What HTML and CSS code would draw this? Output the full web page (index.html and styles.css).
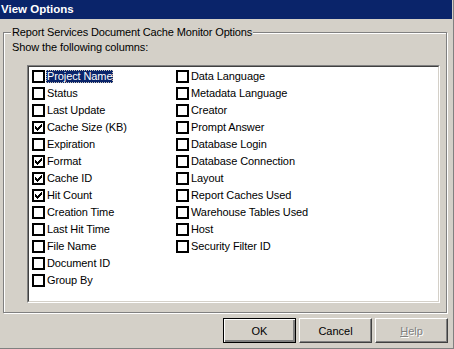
FILE: index.html
```html
<!DOCTYPE html>
<html>
<head>
<meta charset="utf-8">
<link rel="stylesheet" href="styles.css">
</head>
<body>
<div class="window">
  <div class="titlebar">View Options</div>
  <fieldset class="group">
    <legend class="group-label">Report Services Document Cache Monitor Options</legend>
    <div class="caption">Show the following columns:</div>
    <div class="listbox">
      <div class="listbox-inner">
        <div class="items">
          <div class="item"><svg class="cb" viewBox="0 0 13 13"><rect x="1" y="1" width="11" height="11"/></svg><span class="label selected">Project Name</span></div>
          <div class="item"><svg class="cb" viewBox="0 0 13 13"><rect x="1" y="1" width="11" height="11"/></svg><span class="label">Status</span></div>
          <div class="item"><svg class="cb" viewBox="0 0 13 13"><rect x="1" y="1" width="11" height="11"/></svg><span class="label">Last Update</span></div>
          <div class="item"><svg class="cb" viewBox="0 0 13 13"><rect x="1" y="1" width="11" height="11"/><path class="tick" d="M3 5h1v3H3z M4 6h1v3H4z M5 7h1v3H5z M6 6h1v3H6z M7 5h1v3H7z M8 4h1v3H8z M9 3h1v3H9z"/></svg><span class="label">Cache Size (KB)</span></div>
          <div class="item"><svg class="cb" viewBox="0 0 13 13"><rect x="1" y="1" width="11" height="11"/></svg><span class="label">Expiration</span></div>
          <div class="item"><svg class="cb" viewBox="0 0 13 13"><rect x="1" y="1" width="11" height="11"/><path class="tick" d="M3 5h1v3H3z M4 6h1v3H4z M5 7h1v3H5z M6 6h1v3H6z M7 5h1v3H7z M8 4h1v3H8z M9 3h1v3H9z"/></svg><span class="label">Format</span></div>
          <div class="item"><svg class="cb" viewBox="0 0 13 13"><rect x="1" y="1" width="11" height="11"/><path class="tick" d="M3 5h1v3H3z M4 6h1v3H4z M5 7h1v3H5z M6 6h1v3H6z M7 5h1v3H7z M8 4h1v3H8z M9 3h1v3H9z"/></svg><span class="label">Cache ID</span></div>
          <div class="item"><svg class="cb" viewBox="0 0 13 13"><rect x="1" y="1" width="11" height="11"/><path class="tick" d="M3 5h1v3H3z M4 6h1v3H4z M5 7h1v3H5z M6 6h1v3H6z M7 5h1v3H7z M8 4h1v3H8z M9 3h1v3H9z"/></svg><span class="label">Hit Count</span></div>
          <div class="item"><svg class="cb" viewBox="0 0 13 13"><rect x="1" y="1" width="11" height="11"/></svg><span class="label">Creation Time</span></div>
          <div class="item"><svg class="cb" viewBox="0 0 13 13"><rect x="1" y="1" width="11" height="11"/></svg><span class="label">Last Hit Time</span></div>
          <div class="item"><svg class="cb" viewBox="0 0 13 13"><rect x="1" y="1" width="11" height="11"/></svg><span class="label">File Name</span></div>
          <div class="item"><svg class="cb" viewBox="0 0 13 13"><rect x="1" y="1" width="11" height="11"/></svg><span class="label">Document ID</span></div>
          <div class="item"><svg class="cb" viewBox="0 0 13 13"><rect x="1" y="1" width="11" height="11"/></svg><span class="label">Group By</span></div>
          <div class="item"><svg class="cb" viewBox="0 0 13 13"><rect x="1" y="1" width="11" height="11"/></svg><span class="label">Data Language</span></div>
          <div class="item"><svg class="cb" viewBox="0 0 13 13"><rect x="1" y="1" width="11" height="11"/></svg><span class="label">Metadata Language</span></div>
          <div class="item"><svg class="cb" viewBox="0 0 13 13"><rect x="1" y="1" width="11" height="11"/></svg><span class="label">Creator</span></div>
          <div class="item"><svg class="cb" viewBox="0 0 13 13"><rect x="1" y="1" width="11" height="11"/></svg><span class="label">Prompt Answer</span></div>
          <div class="item"><svg class="cb" viewBox="0 0 13 13"><rect x="1" y="1" width="11" height="11"/></svg><span class="label">Database Login</span></div>
          <div class="item"><svg class="cb" viewBox="0 0 13 13"><rect x="1" y="1" width="11" height="11"/></svg><span class="label">Database Connection</span></div>
          <div class="item"><svg class="cb" viewBox="0 0 13 13"><rect x="1" y="1" width="11" height="11"/></svg><span class="label">Layout</span></div>
          <div class="item"><svg class="cb" viewBox="0 0 13 13"><rect x="1" y="1" width="11" height="11"/></svg><span class="label">Report Caches Used</span></div>
          <div class="item"><svg class="cb" viewBox="0 0 13 13"><rect x="1" y="1" width="11" height="11"/></svg><span class="label">Warehouse Tables Used</span></div>
          <div class="item"><svg class="cb" viewBox="0 0 13 13"><rect x="1" y="1" width="11" height="11"/></svg><span class="label">Host</span></div>
          <div class="item"><svg class="cb" viewBox="0 0 13 13"><rect x="1" y="1" width="11" height="11"/></svg><span class="label">Security Filter ID</span></div>
        </div>
      </div>
    </div>
  </fieldset>
  <div class="buttons">
    <button class="btn default">OK</button>
    <button class="btn">Cancel</button>
    <button class="btn disabled"><span class="ul">H</span>elp</button>
  </div>
</div>
</body>
</html>
```

FILE: styles.css
```css
html, body {
  margin: 0;
  padding: 0;
  background: #d4d0c8;
}
body {
  font-family: "Liberation Sans", Arial, sans-serif;
  font-size: 11px;
  color: #000;
}
.window {
  width: 453px;
  height: 348px;
  border-right: 1px solid #808080;
  border-bottom: 1px solid #808080;
  display: flex;
  flex-direction: column;
  overflow: hidden;
}
.titlebar {
  height: 19px;
  width: 452px;
  background: #0a246a;
  color: #fff;
  font-weight: bold;
  font-size: 11.5px;
  line-height: 18px;
  padding-left: 1px;
  box-sizing: border-box;
}
.group {
  margin: 7px 0 0 3px;
  padding: 0;
  width: 444px;
  height: 287px;
  box-sizing: border-box;
  border: 1px solid #808080;
  box-shadow: inset 1px 1px #fff, 1px 1px #fff;
  min-inline-size: 0;
  display: flex;
  flex-direction: column;
}
.group-label {
  margin-left: 7px;
  padding: 0 1px;
  line-height: 13px;
  letter-spacing: -0.15px;
  background: #d4d0c8;
}
.caption {
  margin: 2px 0 0 8px;
  line-height: 13px;
  letter-spacing: -0.1px;
}
.listbox {
  margin: 11px 0 0 23px;
  width: 413px;
  height: 238px;
  box-sizing: border-box;
  border: 1px solid;
  border-color: #808080 #fff #fff #808080;
}
.listbox-inner {
  height: 100%;
  box-sizing: border-box;
  border: 1px solid;
  border-color: #404040 #d4d0c8 #d4d0c8 #404040;
  background: #fff;
  padding: 1px 0 0 3px;
}
.items {
  display: grid;
  grid-template-columns: 144px auto;
  grid-template-rows: repeat(13, 17px);
  grid-auto-flow: column;
}
.item {
  display: flex;
  align-items: center;
}
.cb {
  width: 13px;
  height: 13px;
  flex: none;
}
.cb rect {
  fill: #fff;
  stroke: #000;
  stroke-width: 2;
}
.cb .tick {
  fill: #000;
}
.label {
  margin-left: 1px;
  padding: 0 1px;
  line-height: 13px;
  white-space: nowrap;
  letter-spacing: -0.1px;
  box-sizing: border-box;
}
.label.selected {
  background: #0a246a;
  color: #fff;
  outline: 1px dotted #c9c4b8;
  outline-offset: -1px;
}
.buttons {
  display: flex;
  justify-content: flex-end;
  gap: 3px;
  margin-top: 5px;
  padding-right: 5px;
}
.btn {
  width: 73px;
  height: 25px;
  box-sizing: border-box;
  font-family: "Liberation Sans", Arial, sans-serif;
  font-size: 11px;
  color: #000;
  background: #d4d0c8;
  border: 1px solid;
  border-color: #fff #404040 #404040 #fff;
  box-shadow: inset -1px -1px #808080;
  padding: 0;
  margin: 0;
}
.btn.default {
  border: 1px solid #000;
  box-shadow: inset 1px 1px #fff, inset -2px -2px #808080, inset -1px -1px #404040;
}
.btn.disabled {
  color: #808080;
  text-shadow: 1px 1px #fff;
}
.ul {
  text-decoration: underline;
}
```
